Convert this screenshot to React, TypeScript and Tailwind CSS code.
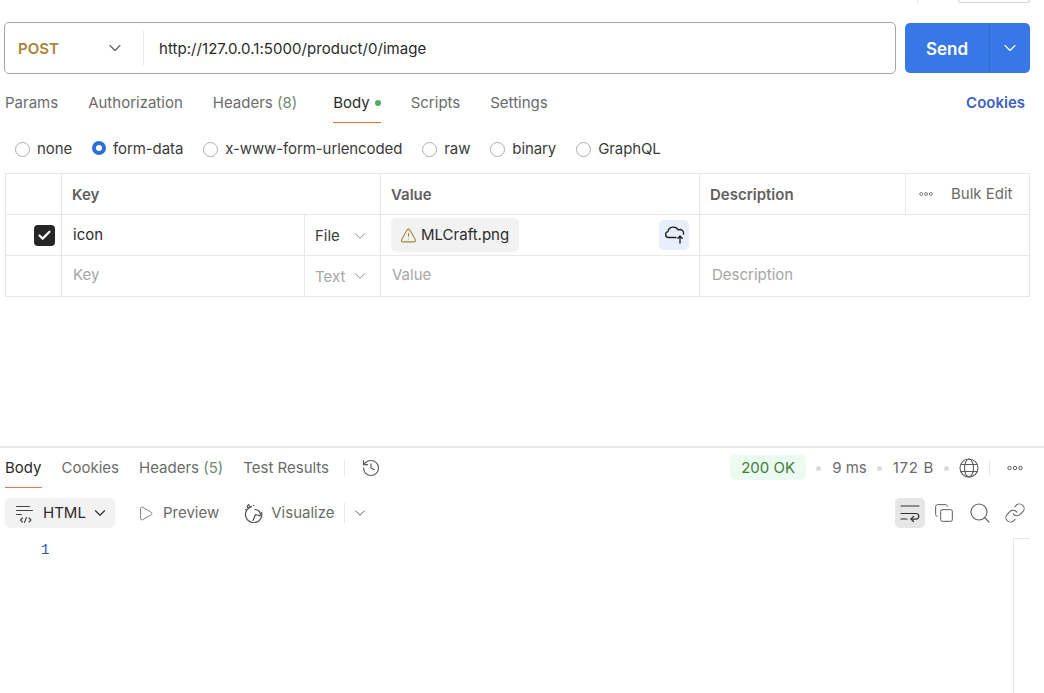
import React from 'react';
import { ChevronDown, Check, TriangleAlert, Play, Copy, Search, Link, History } from 'lucide-react';

const Dots = ({ className }: { className?: string }) => (
  <svg width="16" height="6" viewBox="0 0 16 6" fill="none" stroke="currentColor" strokeWidth="1" className={className}>
    <circle cx="2.5" cy="3" r="1.7" />
    <circle cx="8" cy="3" r="1.7" />
    <circle cx="13.5" cy="3" r="1.7" />
  </svg>
);

const Radio = ({ label, checked }: { label: string; checked?: boolean }) => (
  <div className="flex items-center gap-[7px]">
    {checked ? (
      <span className="w-[14px] h-[14px] rounded-full border-[4px] border-[#2f6fdb] -mt-[2px]" />
    ) : (
      <span className="w-[15px] h-[15px] rounded-full border border-[#adadad]" />
    )}
    <span className="text-[#3b3b3b] tracking-[-0.1px]">{label}</span>
  </div>
);

const RequestTabs = () => (
  <div className="flex items-center h-[48px] pl-[5px] pr-[19px] text-[#6b6b6b]">
    <span className="mr-[30px]">Params</span>
    <span className="mr-[30px]">Authorization</span>
    <span className="mr-[36px]">
      Headers <span className="text-[#6f8a6f]">(8)</span>
    </span>
    <span className="relative mr-[30px] flex items-center gap-[5px] text-[#2b2b2b]">
      Body
      <span className="w-[6px] h-[6px] rounded-full bg-[#4caf5c]" />
      <span className="absolute left-0 right-0 top-[29px] h-[1px] bg-[#f26b3a]" />
    </span>
    <span className="mr-[30px]">Scripts</span>
    <span>Settings</span>
    <span className="ml-auto font-semibold text-[#3d5fc7]">Cookies</span>
  </div>
);

const App = () => {
  return (
    <div className="relative w-[1044px] h-[693px] overflow-hidden bg-white font-['Inter',sans-serif] text-[15px] leading-[20px]">
      {/* cut off edge of the header above */}
      <div className="flex justify-end h-[3px] pr-[14px]">
        <div className="w-[1px] h-[3px] bg-[#e6e6e6] mr-[40px]" />
        <div className="w-[72px] h-[3px] border border-t-0 border-[#d4d4d4] rounded-b-[3px]" />
      </div>

      <div className="flex mt-[19px] pl-[4px] pr-[14px] gap-[9px]">
        <div className="flex-1 h-[52px] flex items-center rounded-[5px] border border-[#a6a6a6]">
          <div className="w-[139px] h-[34px] flex items-center pl-[13px] border-r border-[#e6e6e6]">
            <span className="font-semibold text-[#a9853b] mt-[1px]">POST</span>
            <ChevronDown className="ml-[46px] w-[20px] h-[20px] text-[#5c5c5c]" strokeWidth={1.3} />
          </div>
          <span className="ml-[15px] mt-[1px] text-[#2b2b2b] tracking-[0.05px]">http://127.0.0.1:5000/product/0/image</span>
        </div>
        <div className="w-[125px] h-[50px] mt-[1px] flex rounded-[5px] bg-[#3778e6] text-white">
          <span className="w-[85px] flex items-center justify-center pt-[1px] text-[17px] font-semibold border-r border-[#2f69cd]">Send</span>
          <span className="flex-1 flex items-center justify-center">
            <ChevronDown className="w-[20px] h-[20px]" strokeWidth={1.3} />
          </span>
        </div>
      </div>

      <div className="mt-[5px]">
        <RequestTabs />
      </div>

      <div className="flex items-center h-[28px] mt-[8px] pl-[15px] gap-[20px]">
        <Radio label="none" />
        <Radio label="form-data" checked />
        <Radio label="x-www-form-urlencoded" />
        <Radio label="raw" />
        <Radio label="binary" />
        <Radio label="GraphQL" />
      </div>

      {/* params table */}
      <div className="mt-[10px] ml-[5px] w-[1025px] border-t border-l border-[#e8e8e8]">
        <div className="grid grid-cols-[56px_319px_319px_206px_124px] h-[41px] border-b border-[#e8e8e8] font-semibold text-[#5f5f5f]">
          <div className="border-r border-[#e8e8e8]" />
          <div className="border-r border-[#e8e8e8] flex items-center pl-[10px] pt-[1px]">Key</div>
          <div className="border-r border-[#e8e8e8] flex items-center pl-[10px] pt-[1px]">Value</div>
          <div className="border-r border-[#e8e8e8] flex items-center pl-[10px] pt-[1px]">Description</div>
          <div className="border-r border-[#e8e8e8] flex items-center pl-[13px] font-normal text-[#6b6b6b]">
            <Dots className="w-[14px]" />
            <span className="ml-[18px] -mt-[1px]">Bulk Edit</span>
          </div>
        </div>
        <div className="grid grid-cols-[56px_243px_76px_319px_330px] h-[41px] border-b border-[#e8e8e8]">
          <div className="border-r border-[#e8e8e8] flex items-center justify-end pr-[6px]">
            <span className="w-[21px] h-[21px] rounded-[4px] bg-[#262626] flex items-center justify-center">
              <Check className="w-[15px] h-[15px] text-white" strokeWidth={3.5} />
            </span>
          </div>
          <div className="border-r border-[#e8e8e8] flex items-center pl-[11px] text-[#2b2b2b]">icon</div>
          <div className="border-r border-[#e8e8e8] flex items-center pl-[10px] pt-[1px] text-[#3b3b3b]">
            File
            <ChevronDown className="ml-[11px] w-[18px] h-[18px] text-[#8a8a8a]" strokeWidth={1.3} />
          </div>
          <div className="border-r border-[#e8e8e8] flex items-center justify-between pl-[10px] pr-[10px]">
            <span className="h-[34px] w-[128px] flex items-center pl-[9px] gap-[4px] rounded-[5px] bg-[#f2f2f2] text-[#2b2b2b]">
              <TriangleAlert className="w-[17px] h-[17px] text-[#a9853b]" strokeWidth={1.5} />
              MLCraft.png
            </span>
            <span className="w-[30px] h-[30px] rounded-[5px] bg-[#e8effc] flex items-center justify-center">
              <svg width="22" height="22" viewBox="0 0 22 22" fill="none" stroke="#1f1f1f" strokeWidth="1.35" strokeLinecap="round" strokeLinejoin="round">
                <path d="M13 13.5H5.5a3 3 0 0 1-.6-5.9A5.6 5.6 0 0 1 15.3 6a3.6 3.6 0 0 1 5.2 4" />
                <path d="M17 19v-7M14.8 14.2 17 12l2.2 2.2" />
              </svg>
            </span>
          </div>
          <div className="border-r border-[#e8e8e8]" />
        </div>
        <div className="grid grid-cols-[56px_243px_76px_319px_330px] h-[41px] border-b border-[#e8e8e8] text-[#a6a6a6]">
          <div className="border-r border-[#e8e8e8]" />
          <div className="border-r border-[#e8e8e8] flex items-center pl-[11px] pb-[2px]">Key</div>
          <div className="border-r border-[#e8e8e8] flex items-center pl-[10px]">
            <span className="mt-[1px]">Text</span>
            <ChevronDown className="ml-[6px] w-[18px] h-[18px] text-[#8a8a8a]" strokeWidth={1.3} />
          </div>
          <div className="border-r border-[#e8e8e8] flex items-center pl-[11px] pb-[2px]">Value</div>
          <div className="border-r border-[#e8e8e8] flex items-center pl-[12px] pb-[2px]">Description</div>
        </div>
      </div>

      {/* response */}
      <div className="mt-[149px] h-[2px] bg-[#e8e8e8]" />
      <div className="flex items-center h-[40px] pl-[5px] pr-[20px] text-[#6b6b6b]">
        <span className="relative text-[#2b2b2b] mr-[20px] -mt-[1px]">
          Body
          <span className="absolute left-0 right-0 top-[29px] h-[1px] bg-[#e8775a]" />
        </span>
        <span className="mr-[20px] -mt-[1px]">Cookies</span>
        <span className="mr-[20px] -mt-[1px]">
          Headers <span className="text-[#6f8a6f]">(5)</span>
        </span>
        <span className="-mt-[1px]">Test Results</span>
        <span className="w-[1px] h-[16px] bg-[#e6e6e6] ml-[15px] mr-[16px]" />
        <History className="w-[20px] h-[20px] text-[#5c5c5c]" strokeWidth={1.4} />
        <span className="ml-auto h-[25px] w-[76px] flex items-center justify-center rounded-[5px] bg-[#ebfbef] text-[#3f7d3f] -mt-[1px]">200 OK</span>
        <span className="w-[5px] h-[5px] rounded-full bg-[#dcdcdc] ml-[10px] mr-[11px]" />
        <span className="-mt-[1px]">9 ms</span>
        <span className="w-[5px] h-[5px] rounded-full bg-[#dcdcdc] ml-[10px] mr-[11px]" />
        <span className="-mt-[1px] tracking-[0.7px]">172 B</span>
        <span className="w-[5px] h-[5px] rounded-full bg-[#dcdcdc] ml-[10px] mr-[10px]" />
        <svg width="20" height="20" viewBox="0 0 20 20" fill="none" stroke="#5c5c5c" strokeWidth="1.1">
          <circle cx="10" cy="10" r="9" />
          <ellipse cx="10" cy="10" rx="4.5" ry="9" />
          <path d="M2 6.5h16M2 13.5h16" />
        </svg>
        <span className="w-[1px] h-[16px] bg-[#e6e6e6] ml-[10px] mr-[16px]" />
        <Dots className="w-[18px] text-[#5c5c5c]" />
      </div>

      <div className="flex items-center h-[30px] mt-[10px] pl-[5px] pr-[18px]">
        <div className="w-[110px] h-[30px] flex items-center pl-[10px] rounded-[5px] bg-[#f2f2f2] text-[#2b2b2b]">
          <svg width="20" height="20" viewBox="0 0 20 20" fill="none" stroke="#444" strokeWidth="1.1" strokeLinecap="round" strokeLinejoin="round">
            <path d="M1.5 3.5h13M1.5 7.5h16M1.5 11.5h5" />
            <path d="M7.5 15l-2 2 2 2M14 15l2 2-2 2M11.5 14.5l-2 5" />
          </svg>
          <span className="ml-[8px] -mt-[1px]">HTML</span>
          <ChevronDown className="ml-[5px] w-[18px] h-[18px] text-[#3b3b3b]" strokeWidth={1.8} />
        </div>
        <Play className="ml-[22px] w-[17px] h-[17px] text-[#6b6b6b]" strokeWidth={1.2} />
        <span className="ml-[9px] -mt-[1px] text-[#6b6b6b]">Preview</span>
        <svg className="ml-[25px]" width="20" height="20" viewBox="0 0 20 20" fill="none" stroke="#4d4d4d" strokeWidth="1.2" strokeLinecap="round" strokeLinejoin="round">
          <path d="M7.5 3.6A8.2 8.2 0 1 0 17.6 9.5" />
          <path d="M11 6.5a5 5 0 0 1 5 6.5l-4.5-1.5L9 17.5" />
          <path d="M4.5 1.5 6 3.5 4.5 5.5 3 3.5ZM1.5 6.5h.2M9.5 2.5h.2" />
        </svg>
        <span className="ml-[7px] -mt-[1px] text-[#6b6b6b]">Visualize</span>
        <span className="w-[1px] h-[20px] bg-[#e6e6e6] ml-[9px]" />
        <ChevronDown className="ml-[6px] w-[18px] h-[18px] text-[#5c5c5c]" strokeWidth={1.3} />
        <div className="ml-auto w-[30px] h-[30px] flex items-center justify-center rounded-[5px] bg-[#e6e6e6]">
          <svg width="20" height="20" viewBox="0 0 20 20" fill="none" stroke="#333" strokeWidth="1.2" strokeLinecap="round" strokeLinejoin="round">
            <path d="M1 3h18M1 10.5h15a2.8 2.8 0 0 1 0 5.6h-5" />
            <path d="M13.5 13.5 11 16l2.5 2.5M1 16h6" />
          </svg>
        </div>
        <Copy className="ml-[9px] w-[20px] h-[20px] text-[#5c5c5c]" strokeWidth={1.2} />
        <Search className="ml-[14px] w-[24px] h-[24px] text-[#5c5c5c]" strokeWidth={1.1} />
        <Link className="ml-[12px] w-[22px] h-[22px] text-[#5c5c5c]" strokeWidth={1.1} />
      </div>

      <div className="flex mt-[10px]">
        <span className="ml-[41px] mt-[2px] font-['Liberation_Mono',monospace] text-[14px] text-[#2a55a8]">1</span>
        <div className="ml-auto mr-[14px] w-[17px] h-[160px] border-t border-l border-[#e6e6e6]" />
      </div>
    </div>
  );
};

export default App;
